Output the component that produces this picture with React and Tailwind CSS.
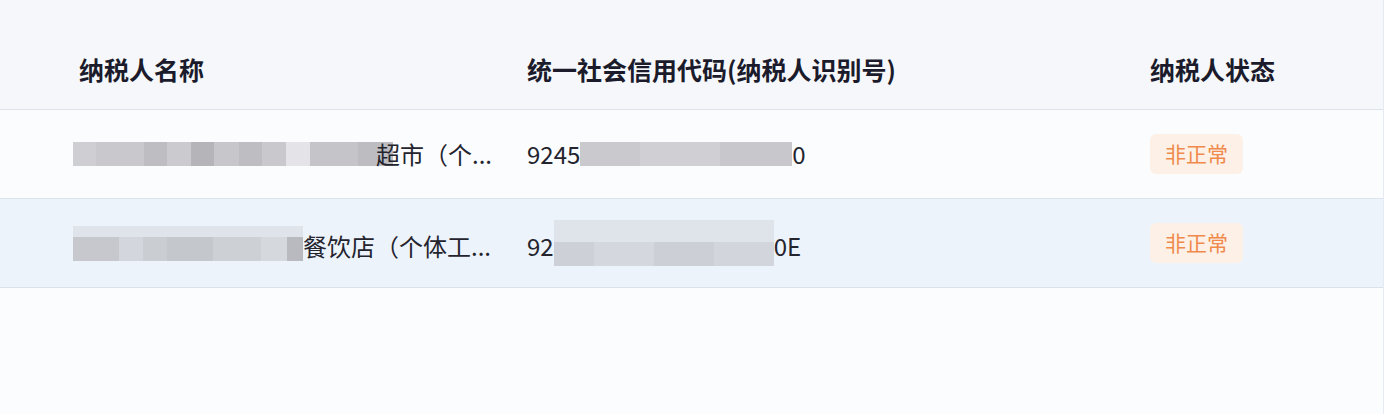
import React from "react";

const font = { fontFamily: '"Noto Sans CJK SC", "Noto Sans", sans-serif' };

function Blur({ tiles, h = "h-[24px]" }) {
  return (
    <div className={`flex ${h}`}>
      {tiles.map(([w, c], i) => (
        <div key={i} className="h-full" style={{ width: w, background: c }} />
      ))}
    </div>
  );
}

function Badge() {
  return (
    <span className="inline-flex h-[40px] w-[93px] items-center justify-center rounded-md bg-[#fdf1e7] text-[21px] text-[#ef8a4c]">
      非正常
    </span>
  );
}

export default function App() {
  return (
    <div
      className="flex h-[414px] w-[1384px] flex-col overflow-hidden border-r border-[#e6ebf1] bg-[#fafcfe]"
      style={font}
    >
      {/* header */}
      <div className="flex h-[110px] shrink-0 border-b border-[#dde4ec] bg-[#f5f7fb] pt-[52px] text-[25px] font-bold leading-[34px] text-[#1b1b2b]">
        <div className="w-[527px] shrink-0 pl-[79px]">纳税人名称</div>
        <div className="w-[623px] shrink-0">统一社会信用代码(纳税人识别号)</div>
        <div>纳税人状态</div>
      </div>

      {/* row 1 */}
      <div className="flex h-[89px] shrink-0 items-center border-b border-[#dde4ec] bg-[#fbfcfe] text-[24px] text-[#24242e]">
        <div className="flex w-[527px] shrink-0 items-center pl-[73px]">
          <Blur
            tiles={[
              [23, "#cfcfd3"],
              [48, "#c9c9cd"],
              [23, "#bdbdc2"],
              [24, "#cacacf"],
              [23, "#b4b4b9"],
              [25, "#c6c6cb"],
              [23, "#bdbdc2"],
              [24, "#c8c8cd"],
              [24, "#e4e4e8"],
              [48, "#c4c4c9"],
              [35, "#bcbcc1"],
            ]}
          />
          <span className="ml-[-17px] whitespace-nowrap">超市（个...</span>
        </div>
        <div className="flex w-[623px] shrink-0 items-center">
          <span>9245</span>
          <Blur
            tiles={[
              [60, "#cacace"],
              [80, "#d0d0d4"],
              [72, "#c8c8cc"],
            ]}
          />
          <span>0</span>
        </div>
        <div>
          <Badge />
        </div>
      </div>

      {/* row 2 */}
      <div className="flex h-[89px] shrink-0 items-center border-b border-[#d9e1ea] bg-[#edf3fb] text-[24px] text-[#24242e]">
        <div className="flex w-[527px] shrink-0 items-center pl-[73px]">
          <div className="flex flex-col">
            <div className="h-[11px] w-[230px] bg-[#dfe3ea]" />
            <Blur
              tiles={[
                [46, "#c6c8cd"],
                [24, "#d3d6dc"],
                [24, "#cacdd2"],
                [46, "#c4c7cc"],
                [48, "#cdd0d5"],
                [26, "#d5d8dd"],
                [16, "#b8babf"],
              ]}
            />
          </div>
          <span className="mt-[6px] whitespace-nowrap">餐饮店（个体工...</span>
        </div>
        <div className="flex w-[623px] shrink-0 items-center">
          <span className="mt-[6px]">92</span>
          <div className="flex flex-col">
            <div className="h-[22px] w-[220px] bg-[#dfe3ea]" />
            <Blur
              tiles={[
                [40, "#cdd0d6"],
                [60, "#d4d7dd"],
                [60, "#ccd0d6"],
                [60, "#d2d5db"],
              ]}
            />
          </div>
          <span className="mt-[6px]">0E</span>
        </div>
        <div>
          <Badge />
        </div>
      </div>

      <div className="flex-1" />
    </div>
  );
}
